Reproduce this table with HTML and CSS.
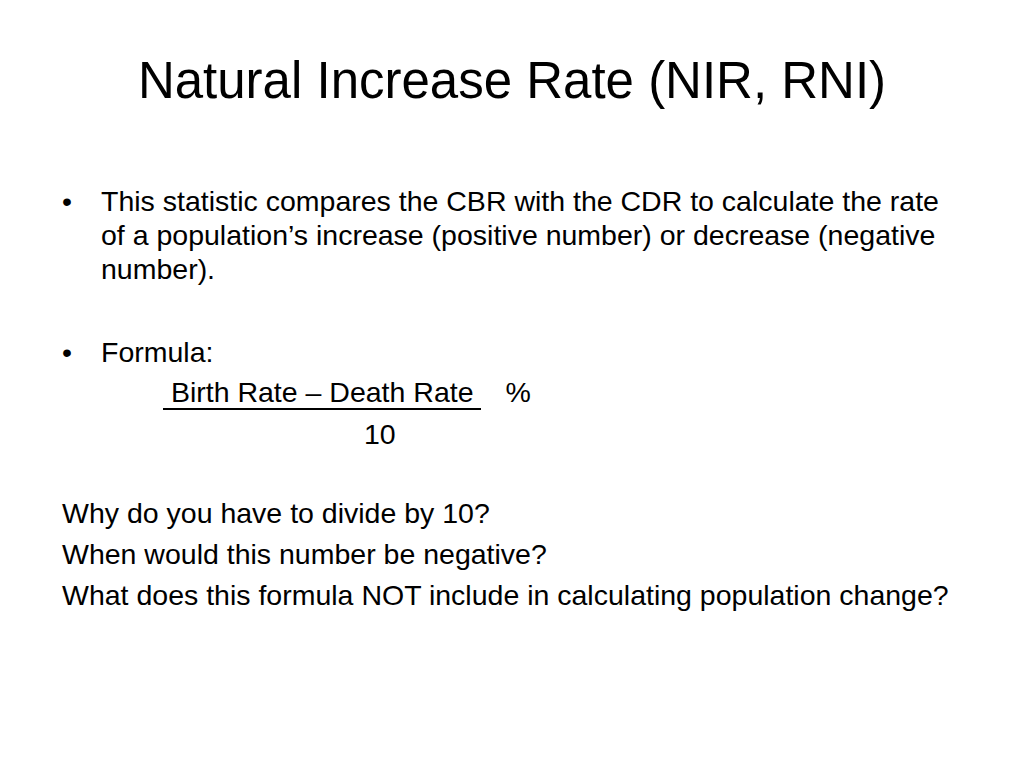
FILE: index.html
```html
<!DOCTYPE html>
<html lang="en">
<head>
<meta charset="utf-8">
<title>Natural Increase Rate (NIR, RNI)</title>
<link rel="stylesheet" href="styles.css">
</head>
<body>
<main class="slide">
  <h1 class="title">Natural Increase Rate (NIR, RNI)</h1>
  <div class="content">
    <div class="bullet">
      <span class="dot">•</span>
      <p class="text">This statistic compares the CBR with the CDR to calculate the rate of a population’s increase (positive number) or decrease (negative number).</p>
    </div>
    <div class="bullet formula-head">
      <span class="dot">•</span>
      <p class="text">Formula:</p>
    </div>
    <p class="formula-num"><span class="frac">&nbsp;Birth Rate – Death Rate&nbsp;</span><span class="pct">%</span></p>
    <p class="formula-den">10</p>
    <p class="question first-q">Why do you have to divide by 10?</p>
    <p class="question">When would this number be negative?</p>
    <p class="question">What does this formula NOT include in calculating population change?</p>
  </div>
</main>
</body>
</html>
```

FILE: styles.css
```css
html, body {
  margin: 0;
  padding: 0;
  background: #ffffff;
}

.slide {
  width: 1024px;
  height: 768px;
  box-sizing: border-box;
  padding-top: 55px;
  color: #000000;
  font-family: "Liberation Sans", Arial, Helvetica, sans-serif;
  overflow: hidden;
}

.title {
  margin: 0;
  font-size: 51px;
  line-height: 51px;
  font-weight: normal;
  text-align: center;
}

.content {
  margin-top: 78px;
  padding: 0 62px;
  font-size: 28.5px;
  line-height: 34px;
}

.bullet {
  display: flex;
  align-items: flex-start;
}

.dot {
  flex: 0 0 39px;
}

.text {
  margin: 0;
  flex: 1 1 auto;
}

.formula-head {
  margin-top: 49px;
}

.formula-num {
  margin: 6px 0 0;
  padding-left: 101px;
}

.frac {
  border-bottom: 2px solid #000000;
}

.pct {
  margin-left: 24px;
}

.formula-den {
  margin: 8px 0 0;
  padding-left: 302px;
}

.question {
  margin: 7px 0 0;
}

.first-q {
  margin-top: 45px;
}
```
